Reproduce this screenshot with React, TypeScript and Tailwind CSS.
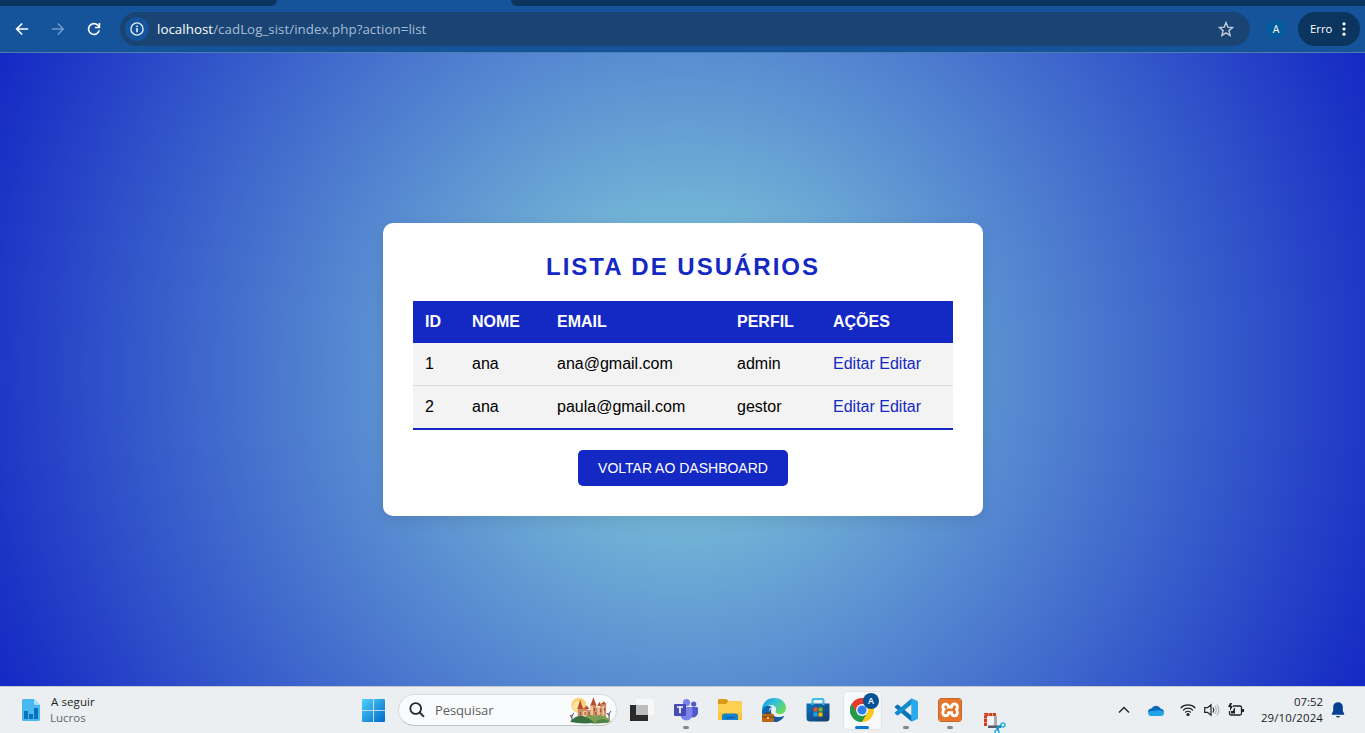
import React from "react";
import { SiXampp } from "react-icons/si";

const users = [
  { id: 1, name: "ana", email: "ana@gmail.com", role: "admin" },
  { id: 2, name: "ana", email: "paula@gmail.com", role: "gestor" },
];

function ChromeBar() {
  return (
    <header className="h-[53px] shrink-0 border-b border-[#4b7fb0] bg-[#15539a] font-['Open_Sans',sans-serif]">
      <div className="flex h-[6px] justify-between bg-[#15539a]">
        <div className="w-[277px] rounded-br-[8px] bg-[#0b355f]" />
        <div className="w-[854px] rounded-bl-[8px] bg-[#0b355f]" />
      </div>
      <div className="flex h-[46px] items-center bg-[#15539a] pr-[5px] pl-[15px]">
        <svg width="14" height="14" viewBox="0 0 14 14" fill="none" stroke="#fff" strokeWidth="1.7" className="shrink-0">
          <path d="M13.2 7H2M7.2 1.5 1.7 7l5.5 5.5" />
        </svg>
        <svg width="14" height="14" viewBox="0 0 14 14" fill="none" stroke="#6f9bcb" strokeWidth="1.5" className="ml-[22px] shrink-0">
          <path d="M.8 7H12M6.8 1.5 12.3 7l-5.5 5.5" />
        </svg>
        <svg width="14" height="14" viewBox="0 0 14 14" fill="none" stroke="#fff" strokeWidth="1.6" className="ml-[22px] shrink-0">
          <path d="M12.2 8.4A5.4 5.4 0 1 1 10.9 3.3L12.4 5" />
          <path d="M12.4 .9v4.6H7.9" />
        </svg>
        <div className="ml-[19px] flex h-[34px] w-[1130px] items-center rounded-full bg-[#194474] pr-4 pl-[5px]">
          <span className="flex size-6 items-center justify-center rounded-full bg-[#15539a]">
            <svg width="14" height="14" viewBox="0 0 14 14" fill="none" stroke="#e4edf6" strokeWidth="1.4">
              <circle cx="7" cy="7" r="6.1" />
              <path d="M7 6v4.3M7 3.5v1.4" strokeWidth="1.6" />
            </svg>
          </span>
          <span className="ml-2 pt-[2px] text-[13.3px] tracking-[0.05px] whitespace-nowrap text-[#a6bdd6]">
            <span className="text-white">localhost</span>/cadLog_sist/index.php?action=list
          </span>
          <svg width="16" height="16" viewBox="0 0 16 16" fill="none" stroke="#c3ccd7" strokeWidth="1.4" className="ml-auto">
            <path d="m8 1.6 1.8 4.5 4.8.4-3.7 3.1 1.2 4.8L8 11.8l-4.1 2.6 1.2-4.8-3.7-3.1 4.8-.4z" />
          </svg>
        </div>
        <span className="ml-4 flex size-5 items-center justify-center rounded-full bg-[#045a9c] pt-px text-[10.5px] text-white">A</span>
        <div className="ml-auto flex h-[34px] w-[62px] items-center rounded-full bg-[#0b355f] pl-3 text-[11.3px] text-white">
          Erro
          <svg width="4" height="14" viewBox="0 0 4 14" fill="#fff" className="ml-auto mr-[14px]">
            <circle cx="2" cy="1.8" r="1.6" />
            <circle cx="2" cy="7" r="1.6" />
            <circle cx="2" cy="12.2" r="1.6" />
          </svg>
        </div>
      </div>
    </header>
  );
}

function UserCard() {
  return (
    <section className="h-[293px] w-[600px] rounded-[10px] bg-white p-[30px] text-center shadow-[0_4px_15px_rgba(0,0,0,0.1)]">
      <h2 className="mb-5 h-7 text-2xl leading-[28px] font-bold tracking-[2px] text-[#1428c4]">LISTA DE USUÁRIOS</h2>
      <table className="h-[129px] w-[540px] table-fixed border-separate border-spacing-0 text-left text-base leading-[18px] text-black">
        <colgroup>
          <col className="w-[47px]" />
          <col className="w-[85px]" />
          <col className="w-[180px]" />
          <col className="w-[96px]" />
          <col className="w-[132px]" />
        </colgroup>
        <thead className="bg-[#1428c4] text-white">
          <tr>
            {["ID", "NOME", "EMAIL", "PERFIL", "AÇÕES"].map((h) => (
              <th key={h} className="h-[42px] px-3 py-0 font-bold">{h}</th>
            ))}
          </tr>
        </thead>
        <tbody className="bg-[#f3f3f3] [&>tr:first-child>td]:h-[43px] [&>tr:first-child>td]:border-b [&>tr:first-child>td]:border-[#ddd] [&>tr:last-child>td]:h-[44px] [&>tr:last-child>td]:border-b-2 [&>tr:last-child>td]:border-[#1428c4]">
          {users.map((u) => (
            <tr key={u.id}>
              <td className="px-3 py-0">{u.id}</td>
              <td className="px-3 py-0">{u.name}</td>
              <td className="px-3 py-0">{u.email}</td>
              <td className="px-3 py-0">{u.role}</td>
              <td className="px-3 py-0 text-[#1428c4]">
                <a>Editar</a> <a>Editar</a>
              </td>
            </tr>
          ))}
        </tbody>
      </table>
      <button className="mt-5 h-9 w-[210px] rounded-[5px] bg-[#1428c4] text-sm whitespace-nowrap text-white">VOLTAR AO DASHBOARD</button>
    </section>
  );
}

function Slot({ children, mark }: { children: React.ReactNode; mark?: boolean }) {
  return (
    <div className="relative flex h-full w-11 items-center justify-center">
      {children}
      {mark && <span className="absolute bottom-[4px] left-[19px] h-[3px] w-[6px] rounded-full bg-[#858789]" />}
    </div>
  );
}

function WindowsLogo() {
  return (
    <svg width="23" height="23" viewBox="0 0 23 23">
      <defs>
        <linearGradient id="win" x1="0" y1="0" x2="1" y2="1">
          <stop offset="0" stopColor="#50d0fc" />
          <stop offset="1" stopColor="#0069c8" />
        </linearGradient>
      </defs>
      <path fill="url(#win)" d="M1 0h10.2v11.2H0V1q0-1 1-1ZM12 0h10q1 0 1 1v10.2H12ZM0 12h11.2v11H1q-1 0-1-1ZM12 12h11v10q0 1-1 1H12Z" />
    </svg>
  );
}

function Castle() {
  return (
    <svg width="43" height="27" viewBox="0 0 44 27">
      <circle cx="10" cy="8" r="7.6" fill="#f8d376" />
      <circle cx="9" cy="9" r="5" fill="#fce5a5" />
      <path fill="#d08c63" d="M9 12h5v-1h5v2h3V7h6v4h4V6h6v16H9z" />
      <path fill="#efc39a" d="M14 14h4v7h-4zM22 9h2.500v11H22zM29 10h2.500v10H29zM34 9h2v11h-2z" />
      <path fill="#b84f2c" d="m8.500 12 3-9.500 3 9.500zM22 8l3-8 3 8zM29 9l2-4.500L33 9zM33 7l2.500-3L38 7zM15 12l3-3.500 3 3.500z" />
      <path fill="#7b4a38" d="M11 15h1v3h-1zM16 15h1v3h-1zM20 15h1v3h-1zM25.500 11h1v3h-1zM27 15h1v3h-1zM32 12h1v3h-1zM36 11h1v3h-1z" />
      <path stroke="#51405e" strokeWidth="1" fill="none" d="M3 24v-6m0 3-2-3m2 1 2-3M41 23v-7m0 3-2-3m2 1 2-3" />
      <path fill="#7d9e53" d="M11 24q9-8 15-5 8-3 16 4v2q-7 2-16 2z" />
      <path fill="#386f40" d="M1 25q8-9 15-5 6 2 10 6-13 2-25-1z" />
      <path fill="#4a8145" d="M26 26q6-6 15-2l-1 2z" />
    </svg>
  );
}

function TeamsIcon() {
  return (
    <svg width="24" height="22" viewBox="0 0 24 22">
      <circle cx="19.7" cy="5" r="2.6" fill="#5059c9" />
      <path d="M17 8h5.8q1.2 0 1.2 1.2V14a5 5 0 0 1-7 4z" fill="#5059c9" />
      <circle cx="12.5" cy="3.7" r="3.6" fill="#7b83eb" />
      <path d="M8 8h9.4q1 0 1 1v6.5a6 6 0 0 1-12 0V9.5z" fill="#7b83eb" />
      <rect y="5" width="12" height="12" rx="1" fill="#464bb5" />
      <path d="M3 8h6M6 8v6.3" stroke="#fff" strokeWidth="1.7" />
    </svg>
  );
}

function FolderIcon() {
  return (
    <svg width="24" height="22" viewBox="0 0 24 22">
      <path d="M0 1.3Q0 0 1.3 0H7.500q1 0 2 1L11 2.500h12q1 0 1 1V8H0z" fill="#d99b18" />
      <path d="M0 5h8l2-2.500h13q1 0 1 1V21H0z" fill="#ffd150" />
      <path d="M0 14h24v7H0z" fill="#fac53d" />
      <path d="M4 21v-4q0-2.500 2.500-2.500h11q2.500 0 2.500 2.500v4z" fill="#1681cf" />
      <path d="M7.500 18.500h9" stroke="#0860a2" strokeWidth="1.200" />
    </svg>
  );
}

function EdgeIcon() {
  return (
    <svg width="24" height="24" viewBox="0 0 24 24">
      <defs>
        <linearGradient id="edge" x1="0" y1="0" x2="1" y2=".6">
          <stop stopColor="#168fd5" />
          <stop offset=".5" stopColor="#2fc3df" />
          <stop offset="1" stopColor="#68db57" />
        </linearGradient>
      </defs>
      <path d="M0 14A12 12 0 0 1 12 0c8 0 12 5 12 10 0 4-3 6-6 6-4 0-5-2-4-4 1-4-5-7-10-3-2 2-3 4-4 5z" fill="url(#edge)" />
      <path d="M0 15c0-6 5-9 10-6-4 1-4 7 0 10 4 2 8 1 12-1-2 4-6 6-10 6-7 0-12-4-12-9z" fill="#0c64b4" />
      <path d="M11 9c-4 3-2 10 5 10 3 0 5-.5 6-1-2 4-6 6-10 6-7-4-7-11-1-15z" fill="#125a9d" />
      <rect y="16" width="12" height="8" rx="1" fill="#b96816" />
      <path d="M4 16v-1.5h4V16M0 19h12" fill="none" stroke="#6f390d" />
      <path d="M5 19h2v2H5z" fill="#ffc24b" />
    </svg>
  );
}

function StoreIcon() {
  return (
    <svg width="24" height="24" viewBox="0 0 24 24">
      <defs>
        <linearGradient id="store" x1="0" y1="0" x2="1" y2="1">
          <stop stopColor="#0b72bd" />
          <stop offset="1" stopColor="#173a69" />
        </linearGradient>
      </defs>
      <path d="M6.5 7V2.2Q6.5 1 7.7 1h8.6q1.2 0 1.2 1.2V7" fill="none" stroke="#39bfe9" strokeWidth="2" />
      <path d="M.5 5.5h23V20q0 3.5-3.5 3.5H4Q.5 23.5 .5 20z" fill="url(#store)" />
      <path d="M6.5 4.5V7M17.5 4.500V7" stroke="#39bfe9" strokeWidth="2" />
      <path d="M7.5 9.5h4v4h-4z" fill="#f05028" />
      <path d="M12.5 9.5h4v4h-4z" fill="#80b81e" />
      <path d="M7.5 14.5h4v4h-4z" fill="#20a4e8" />
      <path d="M12.5 14.5h4v4h-4z" fill="#fbb900" />
    </svg>
  );
}

function ChromeIcon() {
  return (
    <svg width="24" height="24" viewBox="0 0 24 24">
      <path d="M12 12 1.6 6A12 12 0 0 1 22.4 6z" fill="#e33b2e" />
      <path d="M12 12 22.4 6A12 12 0 0 1 12 24z" fill="#fcc91c" />
      <path d="M12 6h10.400l-5.200 9z" fill="#fcc91c" />
      <path d="M12 12v12A12 12 0 0 1 1.600 6z" fill="#249b4b" />
      <path d="m1.6 6 5.2 9L12 6z" fill="#e33b2e" />
      <path d="m12 24 5.2-9H6.8z" fill="#249b4b" />
      <path d="m1.6 6 5.2 9 5.2 3-2 5.8A12 12 0 0 1 1.6 6z" fill="#249b4b" />
      <circle cx="12" cy="12" r="5.9" fill="#fff" />
      <circle cx="12" cy="12" r="4.6" fill="#2d7eec" />
    </svg>
  );
}

function VsCodeIcon() {
  return (
    <svg width="24" height="24" viewBox="0 0 24 24">
      <path d="M1.2 8.2 3 6.7q.6-.4 1.2 0L18 18v5.2q-.8.2-1.5-.4L.8 9.5q-.6-.7.4-1.3z" fill="#0875b9" />
      <path d="M1.2 15.8 3 17.3q.6.4 1.2 0L18 6V.8q-.8-.2-1.500.4L.8 14.500q-.6.700.4 1.300z" fill="#118bd1" />
      <path d="M17.300.4q.3-.2.7 0l5 2.400q1 .5 1 1.500v15.400q0 1-1 1.500l-5 2.400q-.4.200-.7 0z" fill="#2aa9ed" />
    </svg>
  );
}

function SnipIcon() {
  return (
    <svg width="23" height="20" viewBox="0 0 23 20" className="mt-[26px] ml-[2px]">
      <path d="M1.500 13V1.500H12" fill="none" stroke="#d63c1b" strokeWidth="3" strokeDasharray="3.200 .600" />
      <path d="M4 4h7v7H4z" fill="#f3f5f7" />
      <path d="M10 3h3v11h-3z" fill="#a6abb0" />
      <path d="M4 12.500h13v2.500H4z" fill="#555d63" />
      <circle cx="19" cy="12" r="2" fill="none" stroke="#2ab5e8" strokeWidth="1.600" />
      <path d="m12 15 5-2M14 15v3" stroke="#1990cc" strokeWidth="2" />
      <circle cx="13" cy="19" r="2" fill="none" stroke="#2ab5e8" strokeWidth="1.600" />
    </svg>
  );
}

function Taskbar() {
  return (
    <footer className="flex h-[47px] shrink-0 items-center overflow-hidden border-t border-[#c4c9cf] bg-[#ebeff2] font-['Open_Sans',sans-serif]">
      <div className="flex w-[351px] items-center pl-[22px]">
        <svg width="18" height="22" viewBox="0 0 18 22">
          <path d="M1.5 0H12l6 6v14.500q0 1.500-1.500 1.500h-15Q0 22 0 20.500v-19Q0 0 1.500 0z" fill="#48b8ef" />
          <path d="M12 0v4.500Q12 6 13.500 6H18z" fill="#a8e1fb" />
          <path d="M2 12h4v8H2zM7 15h4v5H7zM12 9h4v11h-4z" fill="#0872bd" />
        </svg>
        <div className="ml-[11px] text-[11.5px] leading-4 text-[#1d1f21]">
          <div className="tracking-[0.1px]">A seguir</div>
          <div className="-ml-px text-[#62666a]">Lucros</div>
        </div>
      </div>
      <Slot><WindowsLogo /></Slot>
      <div className="mx-[3px] flex h-8 w-[219px] items-center rounded-full border border-[#d8dbde] border-b-[#bfc3c6] bg-[#fafbfc] pr-1 pl-[10px]">
        <svg width="16" height="16" viewBox="0 0 16 16" fill="none" stroke="#25282a" strokeWidth="1.8">
          <circle cx="6.7" cy="6.5" r="5.4" />
          <path d="m10.7 10.5 4.3 4.3" />
        </svg>
        <span className="ml-[10px] pt-px text-[13px] tracking-[-0.1px] text-[#5c6063]">Pesquisar</span>
        <span className="ml-auto"><Castle /></span>
      </div>
      <Slot>
        <svg width="24" height="22" viewBox="0 0 24 22">
          <path d="M0 6h18v16H0z" fill="#2b2b2b" />
          <path d="M6 0h18v16H6z" fill="#f7f7f7" />
          <path d="M6 6h12v10H6z" fill="#bdbdbd" />
        </svg>
      </Slot>
      <Slot mark><TeamsIcon /></Slot>
      <Slot><FolderIcon /></Slot>
      <Slot><EdgeIcon /></Slot>
      <Slot><StoreIcon /></Slot>
      <div className="relative flex h-full w-11 items-center justify-center">
        <div className="flex h-[39px] w-[39px] items-center justify-center rounded-[4px] border border-[#e2e4e6] bg-[#f8f9fa]">
          <ChromeIcon />
        </div>
        <span className="absolute top-[6px] left-[23px] flex size-4 items-center justify-center rounded-full bg-[#075296] text-[9px] font-semibold text-white">A</span>
        <span className="absolute bottom-[4px] left-[15px] h-[3px] w-[14px] rounded-full bg-[#0878d1]" />
      </div>
      <Slot mark><VsCodeIcon /></Slot>
      <Slot mark>
        <span className="flex size-6 items-center justify-center overflow-hidden rounded-[3px] border border-[#c3672a] bg-white">
          <SiXampp size={24} color="#e6762b" className="shrink-0" />
        </span>
      </Slot>
      <Slot><SnipIcon /></Slot>
      <div className="ml-auto flex items-center pr-[20px] text-[#202224]">
        <svg width="12" height="12" viewBox="0 0 12 12" fill="none" stroke="currentColor" strokeWidth="1.4">
          <path d="m1 8.500 5-5 5 5" />
        </svg>
        <svg width="16" height="11" viewBox="0 0 16 11" className="ml-[18px]">
          <path d="M3.500 3.500A5 5 0 0 1 12.500 3.500 4 4 0 0 1 16 7.200L8 8 0 7Q.3 3.700 3.500 3.500z" fill="#0768bd" />
          <path d="M3 11a3 3 0 0 1-2.500-4.500L9 5.500q6-1 7 2.500 0 3-3 3z" fill="#24a2e9" />
        </svg>
        <svg width="16" height="13" viewBox="0 0 16 13" fill="none" stroke="currentColor" strokeWidth="1.2" className="mb-[2px] ml-4">
          <path d="M.7 5a10.300 10.300 0 0 1 14.600 0M3 7.300a7 7 0 0 1 10 0M5.200 9.500a4 4 0 0 1 5.600 0" />
          <circle cx="8" cy="11.500" r="1" fill="currentColor" />
        </svg>
        <svg width="16" height="14" viewBox="0 0 16 14" fill="none" stroke="currentColor" strokeWidth="1.2" className="ml-2">
          <path d="M.7 4.700h2.800l3.500-3v10.600l-3.500-3H.7zM9 4.500q1.600 2.500 0 5" />
          <path d="M11 3q2.600 4 0 8M13 1.500q3.500 5.500 0 11" stroke="#b3b6b8" />
        </svg>
        <svg width="18" height="14" viewBox="0 0 18 14" className="ml-[7px]">
          <path d="M6 3h7q1.500 0 1.500 1.500v6q0 1.500-1.500 1.500H4q-1.500 0-1.500-1.500V8" fill="none" stroke="currentColor" strokeWidth="1.300" />
          <path d="M15 6h2v3h-2zM4 10.500V8h2l1-3h1v5.500z" fill="currentColor" />
          <path d="M3 0 1 4h2v4l3-5H4l1-3z" fill="currentColor" />
        </svg>
        <div className="ml-[15px] w-[63px] text-right text-[11.4px] leading-4 whitespace-nowrap">
          <div>07:52</div>
          <div className="tracking-[0.16px]">29/10/2024</div>
        </div>
        <svg width="14" height="16" viewBox="0 0 14 16" fill="#053f91" className="ml-2">
          <path d="M2.200 5a4.800 4.800 0 0 1 9.600 0v4l1.500 3q.2.800-.6.800H1.300q-.8 0-.6-.8l1.500-3zM5 14h4q-.5 1.500-2 1.500T5 14z" />
        </svg>
      </div>
    </footer>
  );
}

export default function App() {
  return (
    <div className="flex h-[733px] w-[1365px] flex-col overflow-hidden font-['Liberation_Sans',Arial,sans-serif]">
      <ChromeBar />
      <main className="flex flex-1 items-center justify-center bg-[radial-gradient(circle,#8bd7db,#1428c4)] pl-px">
        <UserCard />
      </main>
      <Taskbar />
    </div>
  );
}
